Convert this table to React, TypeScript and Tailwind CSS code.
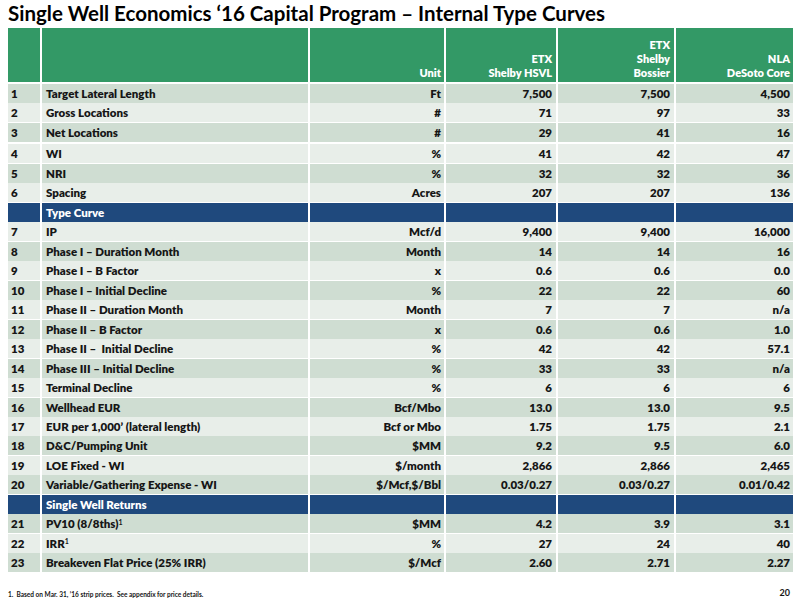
const dark = "bg-[#cfddd2]";
const light = "bg-[#e8eee9]";

type Row =
  | { kind: "data"; n: string; label: React.ReactNode; unit: string; v: [string, string, string]; shade: "d" | "l"; extra?: boolean }
  | { kind: "section"; label: string };

const rows: Row[] = [
  { kind: "data", n: "1", label: "Target Lateral Length", unit: "Ft", v: ["7,500", "7,500", "4,500"], shade: "d" },
  { kind: "data", n: "2", label: "Gross Locations", unit: "#", v: ["71", "97", "33"], shade: "l" },
  { kind: "data", n: "3", label: "Net Locations", unit: "#", v: ["29", "41", "16"], shade: "d" },
  { kind: "data", n: "4", label: "WI", unit: "%", v: ["41", "42", "47"], shade: "l", extra: true },
  { kind: "data", n: "5", label: "NRI", unit: "%", v: ["32", "32", "36"], shade: "d" },
  { kind: "data", n: "6", label: "Spacing", unit: "Acres", v: ["207", "207", "136"], shade: "l" },
  { kind: "section", label: "Type Curve" },
  { kind: "data", n: "7", label: "IP", unit: "Mcf/d", v: ["9,400", "9,400", "16,000"], shade: "l" },
  { kind: "data", n: "8", label: "Phase I – Duration Month", unit: "Month", v: ["14", "14", "16"], shade: "d" },
  { kind: "data", n: "9", label: "Phase I – B Factor", unit: "x", v: ["0.6", "0.6", "0.0"], shade: "l" },
  { kind: "data", n: "10", label: "Phase I – Initial Decline", unit: "%", v: ["22", "22", "60"], shade: "d" },
  { kind: "data", n: "11", label: "Phase II – Duration Month", unit: "Month", v: ["7", "7", "n/a"], shade: "l" },
  { kind: "data", n: "12", label: "Phase II – B Factor", unit: "x", v: ["0.6", "0.6", "1.0"], shade: "d" },
  { kind: "data", n: "13", label: "Phase II –  Initial Decline", unit: "%", v: ["42", "42", "57.1"], shade: "l" },
  { kind: "data", n: "14", label: "Phase III – Initial Decline", unit: "%", v: ["33", "33", "n/a"], shade: "d" },
  { kind: "data", n: "15", label: "Terminal Decline", unit: "%", v: ["6", "6", "6"], shade: "l" },
  { kind: "data", n: "16", label: "Wellhead EUR", unit: "Bcf/Mbo", v: ["13.0", "13.0", "9.5"], shade: "d" },
  { kind: "data", n: "17", label: "EUR per 1,000’ (lateral length)", unit: "Bcf or Mbo", v: ["1.75", "1.75", "2.1"], shade: "l" },
  { kind: "data", n: "18", label: "D&C/Pumping Unit", unit: "$MM", v: ["9.2", "9.5", "6.0"], shade: "d" },
  { kind: "data", n: "19", label: "LOE Fixed - WI", unit: "$/month", v: ["2,866", "2,866", "2,465"], shade: "l" },
  { kind: "data", n: "20", label: "Variable/Gathering Expense - WI", unit: "$/Mcf,$/Bbl", v: ["0.03/0.27", "0.03/0.27", "0.01/0.42"], shade: "d" },
  { kind: "section", label: "Single Well Returns" },
  { kind: "data", n: "21", label: <>PV10 (8/8ths)<sup className="text-[7px] font-bold">1</sup></>, unit: "$MM", v: ["4.2", "3.9", "3.1"], shade: "d" },
  { kind: "data", n: "22", label: <>IRR<sup className="text-[7px] font-bold">1</sup></>, unit: "%", v: ["27", "24", "40"], shade: "l" },
  { kind: "data", n: "23", label: "Breakeven Flat Price (25% IRR)", unit: "$/Mcf", v: ["2.60", "2.71", "2.27"], shade: "d" },
];

const cols = "grid grid-cols-[32px_266px_134px_110px_116px_117px] gap-x-[2px]";

export default function App() {
  return (
    <div
      className="w-[800px] h-[600px] bg-white overflow-hidden text-[#161616]"
      style={{ fontFamily: "Lato, 'Open Sans', sans-serif" }}
    >
      <h1 className="pl-[8px] pt-[1px] h-[28px] text-[20.5px] leading-[25px] font-bold text-black">
        Single Well Economics ‘16 Capital Program – Internal Type Curves
      </h1>

      <div className="flex flex-col gap-y-[2px] pl-[8px] text-[11.5px] font-extrabold">
        <div className={`${cols} h-[54px] text-white text-[11px] leading-[14px]`}>
          <div className="bg-[#339966]" />
          <div className="bg-[#339966]" />
          <div className="bg-[#339966] flex items-end justify-end pr-[3px] pb-[2px]">Unit</div>
          <div className="bg-[#339966] flex flex-col items-end justify-end pr-[4px] pb-[2px]">
            <span>ETX</span>
            <span>Shelby HSVL</span>
          </div>
          <div className="bg-[#339966] flex flex-col items-end justify-end pr-[4px] pb-[2px]">
            <span>ETX</span>
            <span>Shelby</span>
            <span>Bossier</span>
          </div>
          <div className="bg-[#339966] flex flex-col items-end justify-end pr-[3px] pb-[2px]">
            <span>NLA</span>
            <span>DeSoto Core</span>
          </div>
        </div>

        {rows.map((r, i) => {
          if (r.kind === "section") {
            return (
              <div key={i} className={`${cols} h-[17.48px] leading-[19px] text-white`}>
                <div className="bg-[#1f497d]" />
                <div className="bg-[#1f497d] pl-[4px]">{r.label}</div>
                <div className="bg-[#1f497d]" />
                <div className="bg-[#1f497d]" />
                <div className="bg-[#1f497d]" />
                <div className="bg-[#1f497d]" />
              </div>
            );
          }
          const bg = r.shade === "d" ? dark : light;
          return (
            <div key={i} className={`${cols} h-[17.48px] leading-[19px] ${r.extra ? "mt-[2px]" : ""}`}>
              <div className={`${bg} pl-[3px]`}>{r.n}</div>
              <div className={`${bg} pl-[4px] whitespace-pre`}>{r.label}</div>
              <div className={`${bg} pr-[3px] text-right`}>{r.unit}</div>
              <div className={`${bg} pr-[4px] text-right`}>{r.v[0]}</div>
              <div className={`${bg} pr-[4px] text-right`}>{r.v[1]}</div>
              <div className={`${bg} pr-[3px] text-right`}>{r.v[2]}</div>
            </div>
          );
        })}
      </div>

      <div className="flex items-center justify-between pl-[8px] pr-[10px] mt-[16px] h-[10px]">
        <p className="text-[6.5px] leading-[8px] font-bold whitespace-pre translate-y-[3px]">
          1.  Based on Mar. 31, ’16 strip prices.  See appendix for price details.
        </p>
        <p className="text-[9px] leading-[10px] font-bold translate-y-[1px]">20</p>
      </div>
    </div>
  );
}
